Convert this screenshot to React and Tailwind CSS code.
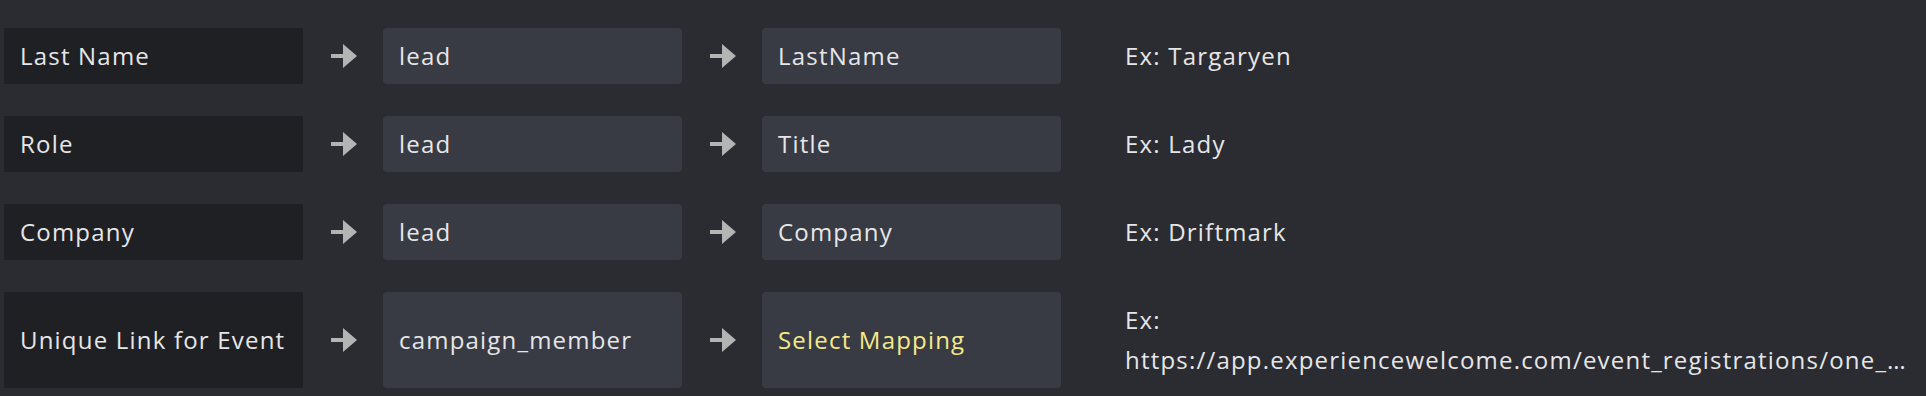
import React from "react";

const rows = [
  { label: "Last Name", object: "lead", field: "LastName", example: "Ex: Targaryen" },
  { label: "Role", object: "lead", field: "Title", example: "Ex: Lady" },
  { label: "Company", object: "lead", field: "Company", example: "Ex: Driftmark" },
  {
    label: "Unique Link for Event",
    object: "campaign_member",
    field: null,
    example: "Ex: https://app.experiencewelcome.com/event_registrations/one_click_registration_token",
    tall: true,
  },
];

function Arrow() {
  return (
    <div className="flex items-center justify-start pl-[28px]">
      <svg width="26" height="24" viewBox="0 0 26 24" fill="#b4b4b4">
        <rect x="0" y="10" width="13" height="4" />
        <polygon points="12,0 26,12 12,24" />
      </svg>
    </div>
  );
}

function MappingRow({ row }) {
  const h = row.tall ? "h-[96px]" : "h-[56px]";
  return (
    <div className={`grid grid-cols-[299px_80px_299px_80px_299px_1fr] ${h}`}>
      <div className="flex items-center bg-[#1f2024] pl-[16px] text-[#e6e6e8]">
        {row.label}
      </div>
      <Arrow />
      <div className="flex items-center rounded-[4px] bg-[#383b43] pl-[16px] text-[#e6e6e8]">
        {row.object}
      </div>
      <Arrow />
      <div className="flex items-center rounded-[4px] bg-[#383b43] pl-[16px]">
        {row.field ? (
          <span className="text-[#e6e6e8]">{row.field}</span>
        ) : (
          <span className="text-[#f6e98a]">Select Mapping</span>
        )}
      </div>
      <div className="flex items-center min-w-0 pl-[64px] pr-[8px]">
        <div className="w-full overflow-hidden text-ellipsis leading-[40px] text-[#e6e6e8]">
          {row.example}
        </div>
      </div>
    </div>
  );
}

export default function App() {
  return (
    <div
      className="min-h-screen bg-[#2b2c31] pl-[4px] pt-[28px] flex flex-col gap-[32px] text-[24px] tracking-[1.2px]"
      style={{ fontFamily: "'Open Sans', Lato, sans-serif" }}
    >
      {rows.map((row) => (
        <MappingRow key={row.label} row={row} />
      ))}
    </div>
  );
}
